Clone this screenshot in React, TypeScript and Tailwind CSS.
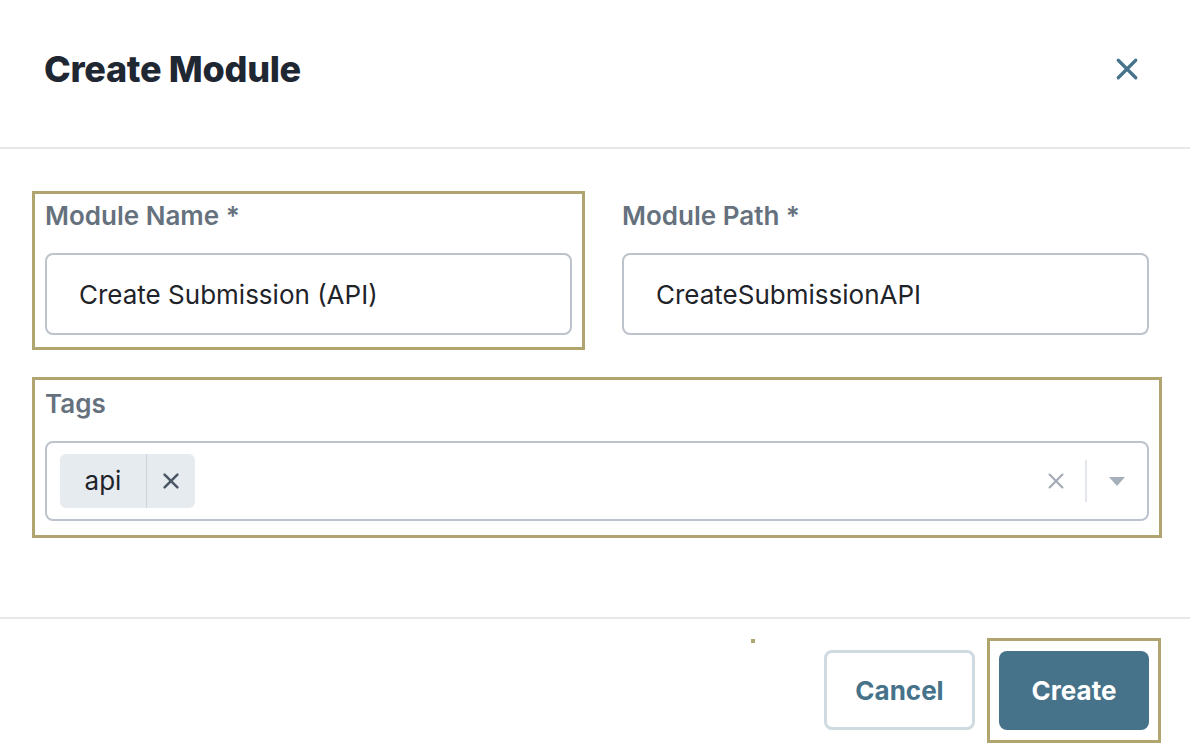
import React from "react";

const font = { fontFamily: "Inter, 'Noto Sans', sans-serif" };

function XIcon({ size, stroke, color }: { size: number; stroke: number; color: string }) {
  return (
    <svg width={size} height={size} viewBox="0 0 24 24" fill="none" stroke={color} strokeWidth={stroke} strokeLinecap="round">
      <path d="M5 5 L19 19 M19 5 L5 19" />
    </svg>
  );
}

export default function App() {
  return (
    <div className="w-[1190px] h-[756px] bg-white flex flex-col relative overflow-hidden" style={font}>
      {/* Header */}
      <div className="h-[147px] flex items-center justify-between pl-[44px] pr-[48px] pb-[10px] shrink-0">
        <h1 className="text-[36px] font-extrabold text-[#1f2733] tracking-[-0.3px]">Create Module</h1>
        <XIcon size={30} stroke={2.6} color="#46728a" />
      </div>
      <div className="h-[2px] bg-[#e8e8e8] shrink-0" />

      {/* Body */}
      <div className="flex-1 px-[32px] pt-[42px] flex flex-col gap-[27px]">
        <div className="grid grid-cols-2 gap-[24px] w-[1130px]">
          <div className="border-[3px] border-[#b1a56f] px-[10px] pt-[6px] pb-[12px] flex flex-col gap-[21px]">
            <label className="text-[26px] leading-[32px] font-semibold text-[#66717e]">Module Name *</label>
            <div className="h-[82px] rounded-[8px] border-2 border-[#bcc3cc] flex items-center pl-[32px] text-[26px] text-[#1f232a]">
              Create Submission (API)
            </div>
          </div>
          <div className="border-[3px] border-transparent px-[10px] pt-[6px] pb-[12px] flex flex-col gap-[21px]">
            <label className="text-[26px] leading-[32px] font-semibold text-[#66717e]">Module Path *</label>
            <div className="h-[82px] rounded-[8px] border-2 border-[#bcc3cc] flex items-center pl-[32px] text-[26px] text-[#1f232a]">
              CreateSubmissionAPI
            </div>
          </div>
        </div>

        <div className="w-[1130px] border-[3px] border-[#b1a56f] px-[10px] pt-[8px] pb-[14px] flex flex-col gap-[21px]">
          <label className="text-[26px] leading-[32px] font-semibold text-[#66717e]">Tags</label>
          <div className="h-[80px] rounded-[8px] border-2 border-[#bcc3cc] flex items-center pl-[13px] pr-[22px]">
            <div className="flex h-[54px] rounded-[6px] bg-[#e6ebf0] overflow-hidden">
              <span className="w-[86px] flex items-center justify-center text-[26px] text-[#1f232a] pb-[2px]">api</span>
              <span className="w-px bg-[#cdd4db]" />
              <span className="w-[48px] flex items-center justify-center">
                <XIcon size={22} stroke={2.8} color="#4d5866" />
              </span>
            </div>
            <div className="flex-1" />
            <XIcon size={22} stroke={2.4} color="#a3abb5" />
            <span className="w-[2px] h-[42px] bg-[#e3e6ea] ml-[18px] mr-[22px]" />
            <svg width="16" height="9" viewBox="0 0 16 9">
              <path d="M0 0 L16 0 L8 9 Z" fill="#a6b0bb" />
            </svg>
          </div>
        </div>
      </div>

      {/* Footer */}
      <div className="h-[2px] bg-[#e8e8e8] shrink-0" />
      <div className="h-[137px] shrink-0 flex items-start justify-end pr-[29px] pt-[19px] gap-[12px] relative">
        <span className="absolute left-[751px] top-[20px] w-[4px] h-[4px] bg-[#b1a56f]" />
        <button className="mt-[12px] w-[151px] h-[80px] rounded-[8px] border-[3px] border-[#cfdae1] bg-white text-[26px] font-bold text-[#46728a]">
          Cancel
        </button>
        <div className="border-[3px] border-[#b1a56f] px-[9px] pt-[10px] pb-[10px]">
          <button className="w-[150px] h-[79px] rounded-[8px] bg-[#46728a] text-[26px] font-bold text-white">
            Create
          </button>
        </div>
      </div>
    </div>
  );
}
